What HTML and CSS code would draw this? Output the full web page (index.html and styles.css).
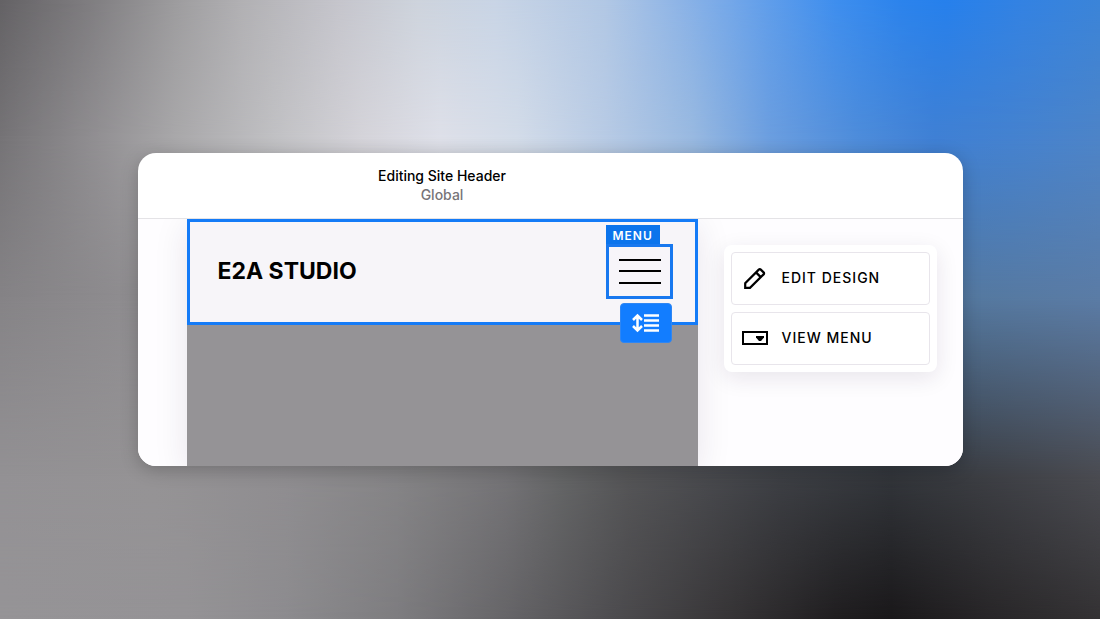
FILE: index.html
```html
<!doctype html>
<html lang="en">
    <head>
        <meta charset="utf-8">
        <meta name="viewport" content="width=device-width,initial-scale=1">
        <title>Editing Site Header</title>
        <link rel="stylesheet" href="styles.css">
    </head>
    <body>
        <div class="backdrop" aria-hidden="true">
            <div class="band band-floor"></div>
            <div class="band band-low"></div>
            <div class="band band-middle"></div>
            <div class="band band-high"></div>
            <div class="band band-top"></div>
        </div>
        <main class="editor">
            <header class="editor-bar">
                <div class="editor-title">
                    <h1>Editing Site Header</h1>
                    <p>Global</p>
                </div>
            </header>
            <div class="workspace">
                <section class="canvas">
                    <div class="site-header">
                        <a class="site-name" href="#">E2A STUDIO</a>
                        <div class="menu-block">
                            <span class="menu-tag">MENU</span>
                            <button class="burger" type="button" aria-label="Open menu">
                                <svg width="42" height="26" viewBox="0 0 42 26">
                                    <path d="M0 1h42M0 12h42M0 24h42" stroke="#000" stroke-width="2"/>
                                </svg>
                            </button>
                            <button class="spacing" type="button" aria-label="Adjust spacing">
                                <svg width="28" height="20" viewBox="0 0 28 20" fill="none" stroke="#fff">
                                    <path d="M5.5 2.5v15M1 7l4.5-4.5L10 7M1 13l4.5 4.5L10 13" stroke-width="2.5"/>
                                    <path d="M12 2.5h15M12 7.5h15M12 12.5h15M12 17.5h15" stroke-width="2.5"/>
                                </svg>
                            </button>
                        </div>
                    </div>
                </section>
                <aside class="side">
                    <div class="panel">
                        <button class="action" type="button">
                            <svg width="28" height="24" viewBox="0 0 28 24" fill="none" stroke="#000" stroke-width="2.2">
                                <path d="M4.2 21.8v-4.6L17.8 3.6q1-1 2 0l2.8 2.8q1 1 0 2L9 21.8zM15 6.4l5 5"/>
                            </svg>
                            EDIT DESIGN
                        </button>
                        <button class="action" type="button">
                            <svg width="28" height="24" viewBox="0 0 28 24">
                                <path d="M2 6h24v12H2z" fill="none" stroke="#000" stroke-width="2"/>
                                <path d="M15 10h8v1.5L20 15h-2l-3-3.5z" fill="#000"/>
                            </svg>
                            VIEW MENU
                        </button>
                    </div>
                </aside>
            </div>
        </main>
    </body>
</html>
```
FILE: styles.css
```css
* {
    box-sizing: border-box;
}
body {
    margin: 0;
    min-height: 100vh;
    display: grid;
    grid-template-columns: 100%;
    align-items: center;
    justify-items: center;
    font-family: Inter, "Liberation Sans", sans-serif;
    color: #000;
}
h1,
p {
    margin: 0;
}
button {
    font: inherit;
    color: inherit;
    cursor: pointer;
}
svg {
    display: block;
}

/* each band fades into the one under it */
.backdrop {
    grid-area: 1 / 1;
    align-self: stretch;
    justify-self: stretch;
    display: grid;
}
.band {
    grid-area: 1 / 1;
}
.band-floor {
    background: linear-gradient(90deg, #969497 0%, #959396 17%, #8d8c8f 26%, #7e7d80 36%, #666568 46%, #4d4c4f 56%, #373537 66%, #201e20 76%, #1a181a 81%, #282628 90%, #343234 100%);
}
.band-low {
    background: linear-gradient(90deg, #939194 0%, #959395 14%, #8f8d90 26%, #858486 36%, #747376 46%, #646566 51%, #555557 57%, #494a4e 64%, #3d3f44 71%, #32353a 81%, #3a3c41 88%, #4a4b51 100%);
    mask-image: linear-gradient(#000 77%, transparent 100%);
}
.band-middle {
    background: linear-gradient(90deg, #858386 0%, #8f8d90 12%, #999 30%, #aaa 50%, #53789f 85%, #5b7ca6 100%);
    mask-image: linear-gradient(#000 48%, transparent 77%);
}
.band-high {
    background: linear-gradient(90deg, #757376 0%, #929093 9%, #a9a8aa 16%, #c1c1c4 25%, #d5d4da 33%, #dee0e9 40%, #d3dce9 47%, #b8cbe5 55%, #98b9e1 63%, #6b9ee0 70%, #4d8cdb 78%, #3f80d5 85%, #4482d0 92%, #4d84c8 100%);
    mask-image: linear-gradient(#000 22%, transparent 48%);
}
.band-top {
    background: linear-gradient(90deg, #646265 0%, #7e7c7f 8%, #9d9c9e 16%, #b1b0b3 22%, #c5c5cc 31%, #cdd3dc 38%, #c8d4e5 45%, #b1c7e4 55%, #8cb3e6 62%, #5f9dea 70%, #3e8eee 76%, #2b83ec 82%, #2680ec 86%, #3382e2 93%, #3b84d8 100%);
    mask-image: linear-gradient(#000 0%, transparent 22%);
}

.editor {
    grid-area: 1 / 1;
    width: 75%;
    overflow: hidden;
    border-radius: 18px;
    background: #fff;
    box-shadow: 0 4px 18px rgba(0, 0, 0, .22);
    position: relative;
}
.editor-bar,
.workspace {
    display: grid;
    grid-template-columns: 49px minmax(0, 1fr) 265px;
}
.editor-bar {
    padding: 13px 0 14px;
    border-bottom: 1px solid #e4e3e6;
}
.editor-title {
    grid-column: 2;
    text-align: center;
    font-size: 14px;
    line-height: 19px;
}
.editor-title h1 {
    font-size: inherit;
    font-weight: 500;
}
.editor-title p {
    color: #777579;
    font-weight: 500;
}
.workspace {
    overflow: hidden;
    background: #fefdff;
}
.canvas {
    grid-column: 2;
    min-height: 247px;
    background: #959396;
    box-shadow: 0 6px 32px rgba(40, 20, 60, .1);
}
.site-header {
    display: flex;
    align-items: center;
    justify-content: space-between;
    height: 106px;
    padding: 0 22px 2px 28px;
    border: 3px solid #147bf7;
    background: #f7f5f9;
}
.site-name {
    color: #000;
    font-size: 23px;
    font-weight: 700;
    text-decoration: none;
}
.menu-block {
    position: relative;
}
.burger {
    display: block;
    padding: 12px 9px 11px 10px;
    border: 3px solid #1878ef;
    background: #f7f5f9;
}
.menu-tag {
    position: absolute;
    left: 0;
    bottom: 100%;
    padding: 2px 7px 0;
    background: #0b74ec;
    color: #fff;
    font-size: 12px;
    font-weight: 600;
    line-height: 17px;
    letter-spacing: 1px;
}
.spacing {
    position: absolute;
    right: 1px;
    top: calc(100% + 4px);
    padding: 9px 11px;
    border: 1px solid #2f86f3;
    border-radius: 4px;
    background: #127dff;
}
.side {
    padding: 26px 26px 0;
}
.panel {
    display: grid;
    gap: 7px;
    padding: 7px;
    border-radius: 8px;
    background: #fff;
    box-shadow: 0 6px 22px rgba(40, 20, 60, .1);
}
.action {
    display: flex;
    align-items: center;
    gap: 13px;
    height: 53px;
    padding: 0 9px 2px;
    border: 1px solid #e8e5eb;
    border-radius: 4px;
    background: #fff;
    font-size: 14px;
    font-weight: 500;
    letter-spacing: 1px;
}
```
